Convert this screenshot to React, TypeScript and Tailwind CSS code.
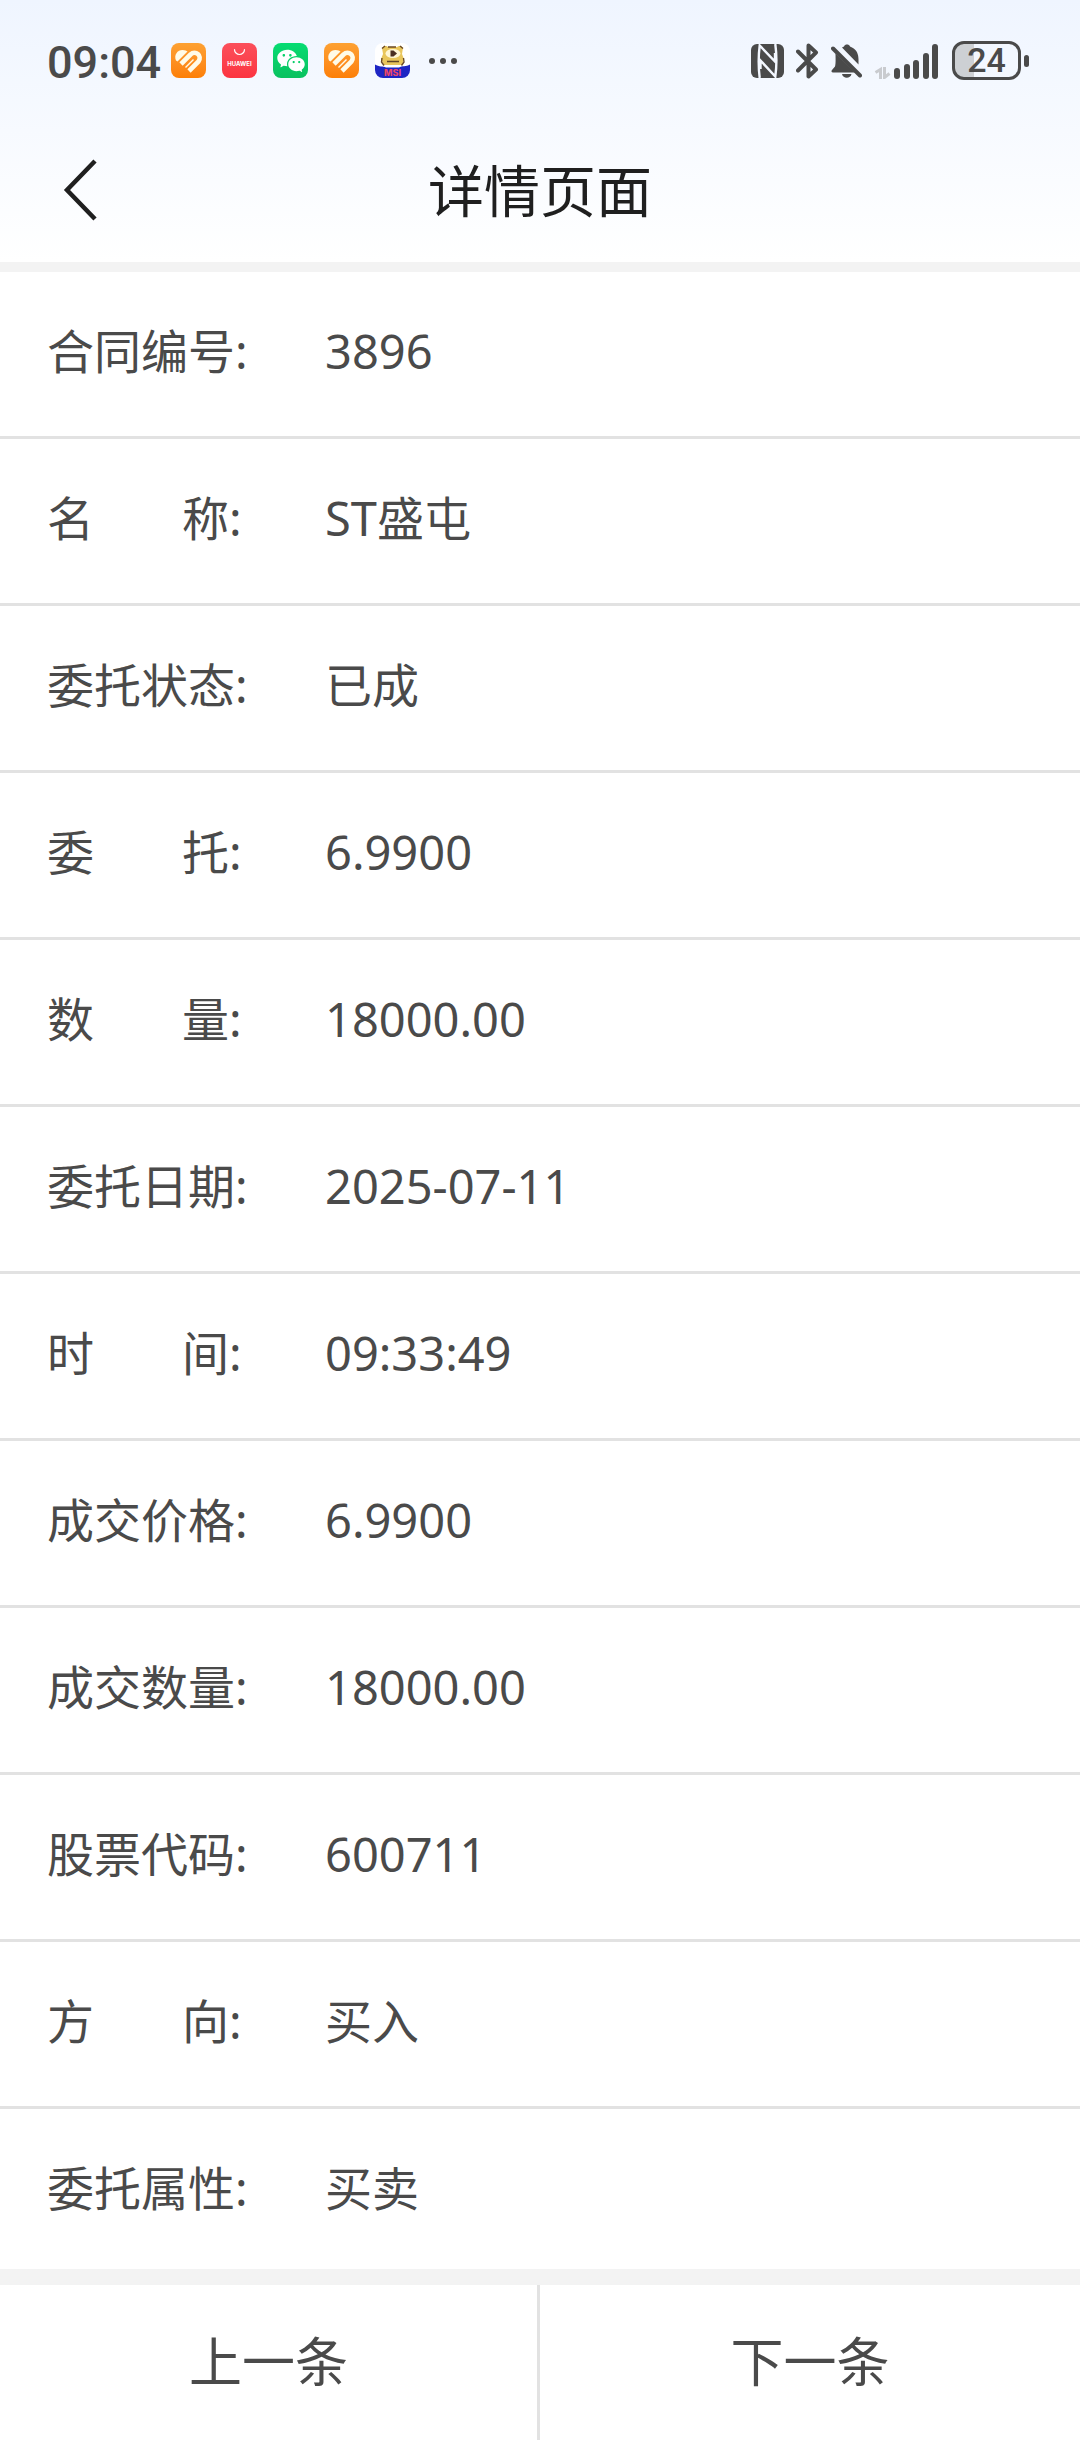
import { RiWechatFill } from 'react-icons/ri';

interface DetailRow {
  label: string[];
  value: string;
}

const rows: DetailRow[] = [
  { label: ['合同编号:'], value: '3896' },
  { label: ['名', '称:'], value: 'ST盛屯' },
  { label: ['委托状态:'], value: '已成' },
  { label: ['委', '托:'], value: '6.9900' },
  { label: ['数', '量:'], value: '18000.00' },
  { label: ['委托日期:'], value: '2025-07-11' },
  { label: ['时', '间:'], value: '09:33:49' },
  { label: ['成交价格:'], value: '6.9900' },
  { label: ['成交数量:'], value: '18000.00' },
  { label: ['股票代码:'], value: '600711' },
  { label: ['方', '向:'], value: '买入' },
  { label: ['委托属性:'], value: '买卖' },
];

// Status bar icons

function HeartAppIcon() {
  return (
    <span className="size-[35px] rounded-lg bg-linear-to-b from-[#fda132] to-[#fd7f05]">
      <svg viewBox="0 0 35 35" className="size-full" fill="none">
        <path d="M5 17.5C2.5 12 6.5 7 11.5 7c2.5 0 4 .8 5 1.5L6.5 18.5Z" fill="#fffbe8" />
        <path d="M10 21 19.5 11.5c5-4.5 12 1 8 7L18 28" stroke="#fffbe8" strokeWidth="4.6" />
        <path d="m14.5 24.5 8-8" stroke="#fffbe8" strokeWidth="1.5" />
      </svg>
    </span>
  );
}

function HuaweiAppIcon() {
  return (
    <span className="size-[35px] rounded-lg bg-linear-to-b from-[#fb4f5b] to-[#fc3340]">
      <svg viewBox="0 0 35 35" className="size-full">
        <path
          d="M12.5 6.5a5 5 0 0 0 10 0"
          fill="none"
          stroke="#fff"
          strokeWidth="1.2"
          strokeLinecap="round"
        />
        <text
          x="17.5"
          y="22.5"
          textAnchor="middle"
          fontSize="6"
          fontWeight="700"
          fontFamily="Inter, sans-serif"
          fill="#fff"
        >
          HUAWEI
        </text>
      </svg>
    </span>
  );
}

function WechatAppIcon() {
  return (
    <span className="flex size-[35px] items-center justify-center rounded-lg bg-linear-to-b from-[#06dc72] to-[#09c15f]">
      <RiWechatFill className="size-[30px] text-white" />
    </span>
  );
}

function MascotAppIcon() {
  return (
    <span className="size-[35px] overflow-hidden rounded-lg bg-white">
      <svg viewBox="0 0 35 35" className="size-full">
        <path d="M7 5c3-3 5-2 6-1h9c2-2 5-1 6 1l-1 6 2 5-2 6H9l-3-6 2-5Z" fill="#e9c65c" />
        <path
          d="M7 5.5 10 3M28 5.5 25 3M7 15l-.5 4 2.5 3.5M28.5 15l.5 4-2.5 3.5M13 4h8"
          stroke="#6b4a25"
          strokeWidth="1.4"
          fill="none"
        />
        <ellipse cx="18" cy="10.5" rx="7.5" ry="4.6" fill="#fff6d4" />
        <path d="M15.5 7.5h3l3.5 3-3.5 3h-3Z" fill="#4a2f22" />
        <path d="M12 18.5h12" stroke="#5f4426" strokeWidth="1.6" />
        <path d="M0 21.5c4 2.5 8 1.5 11 3h13c3-2 7-.5 11-3V35H0Z" fill="#1d25c4" />
        <text
          x="17.5"
          y="33"
          textAnchor="middle"
          fontSize="9"
          fontWeight="800"
          fontFamily="Inter, sans-serif"
          fill="#ea4668"
        >
          MSI
        </text>
      </svg>
    </span>
  );
}

function NfcIcon() {
  return (
    <svg viewBox="0 0 33 34" className="h-[34px] w-[33px]">
      <rect width="33" height="34" rx="6" fill="#4a4a4a" />
      <path
        d="M8.7 34C7.6 25 7.6 10 8.7 1.5L24 17.5V9M24.3 0C25.5 9 25.5 24 24.3 32.5L9.5 16.5V25"
        fill="none"
        stroke="#f3f7ff"
        strokeWidth="2.4"
      />
    </svg>
  );
}

function BluetoothIcon() {
  return (
    <svg
      viewBox="0 0 23 36"
      className="h-[36px] w-[23px]"
      fill="none"
      stroke="#4a4a4a"
      strokeWidth="4"
      strokeLinecap="round"
      strokeLinejoin="round"
    >
      <path d="M2 8.5 20 26.5l-7.5 7V2.5l7.5 7L2 27.5" />
    </svg>
  );
}

function BellOffIcon() {
  return (
    <svg viewBox="0 0 31 36" className="h-[36px] w-[31px]" fill="#4a4a4a">
      <path d="M4.5 10.5 22 27.5l2 2H2c-1.5 0-2-1.5-1-2.5l3-3.5c1-3 .5-9 .5-13Z" />
      <path d="M11 4.5c1.5-.5 2-1 2.5-2 1-1.5 4-1.5 5 0 .5 1 1 1.5 2.5 2 5 2.5 6.5 7 6.5 12v5Z" />
      <path d="M11 31h9.5c-1 5-8.5 5-9.5 0Z" />
      <path d="m2 5.5 27 27" stroke="#4a4a4a" strokeWidth="4" strokeLinecap="round" />
    </svg>
  );
}

function SignalIcon() {
  return (
    <svg viewBox="0 0 66 36" className="h-[36px] w-[66px]">
      <path
        d="M6.5 36V26.5L1.5 29.5M10.5 24v10.5l5-4"
        fill="none"
        stroke="#c9cbcf"
        strokeWidth="3"
      />
      <g fill="#4a4a4a">
        <rect x="20" y="25" width="6" height="11" rx="3" />
        <rect x="30" y="21" width="6" height="15" rx="3" />
        <rect x="39" y="17" width="6" height="19" rx="3" />
        <rect x="49" y="10" width="6" height="26" rx="3" />
        <rect x="58" y="1" width="6" height="35" rx="3" />
      </g>
    </svg>
  );
}

function Battery() {
  return (
    <div className="flex items-center gap-[3px]">
      <div className="flex h-[39px] w-[69px] items-center justify-center rounded-xl border-3 border-[#4a4a4a] bg-linear-to-r from-[#cdd0d4] from-30% to-transparent to-30% text-[34px] font-medium">
        24
      </div>
      <div className="h-3 w-[5px] rounded-full bg-[#4a4a4a]" />
    </div>
  );
}

function StatusBar() {
  return (
    <div className="flex h-[39px] items-center justify-between pr-[51px] pl-[47px] font-[Roboto,sans-serif] text-[#4a4a4a]">
      <div className="flex items-center">
        <span className="w-[124px] pt-1 text-[45px] leading-9 font-medium">09:04</span>
        <div className="flex items-center gap-4">
          <HeartAppIcon />
          <HuaweiAppIcon />
          <WechatAppIcon />
          <HeartAppIcon />
          <MascotAppIcon />
        </div>
        <div className="ml-[19px] flex gap-[5px]">
          <i className="size-1.5 rounded-full bg-[#4a4a4a]" />
          <i className="size-1.5 rounded-full bg-[#4a4a4a]" />
          <i className="size-1.5 rounded-full bg-[#4a4a4a]" />
        </div>
      </div>
      <div className="flex items-center gap-3">
        <NfcIcon />
        <BluetoothIcon />
        <BellOffIcon />
        <SignalIcon />
        <Battery />
      </div>
    </div>
  );
}

export default function App() {
  return (
    <div className="min-h-screen bg-white font-['Noto_Sans','Noto_Sans_CJK_SC',sans-serif] text-[#4a4a4a]">
      <header className="bg-linear-to-b from-[#eff5ff] to-white pt-[41px]">
        <StatusBar />
        <div className="grid grid-cols-[1fr_auto_1fr] items-center pt-[70px] pb-8">
          <button type="button" aria-label="返回" className="ml-[62px] justify-self-start">
            <svg viewBox="0 0 38 62" className="h-[62px] w-[38px]">
              <path d="M33 2 5 31l28 29" fill="none" stroke="#1f1f1f" strokeWidth="4.5" />
            </svg>
          </button>
          <h1 className="text-[56px] leading-[80px] text-[#1f1f1f]">详情页面</h1>
        </div>
      </header>

      <dl className="border-t-10 border-b-16 border-[#f3f3f3] text-[47px] leading-[60px]">
        {rows.map((row) => (
          <div
            key={row.label.join('')}
            className="flex border-b-3 border-[#e2e2e2] pt-[49px] pb-[55px] pl-[47px] last:border-b-0 last:pb-[51px]"
          >
            <dt className="flex w-[278px] shrink-0 gap-[88px]">
              {row.label.map((part) => (
                <span key={part}>{part}</span>
              ))}
            </dt>
            <dd>{row.value}</dd>
          </div>
        ))}
      </dl>

      <footer className="grid grid-cols-2 text-[53px] leading-[75px]">
        <button type="button" className="border-r-3 border-[#e2e2e2] pt-[39px] pb-[41px]">
          上一条
        </button>
        <button type="button" className="pt-[39px] pb-[41px]">
          下一条
        </button>
      </footer>
    </div>
  );
}
